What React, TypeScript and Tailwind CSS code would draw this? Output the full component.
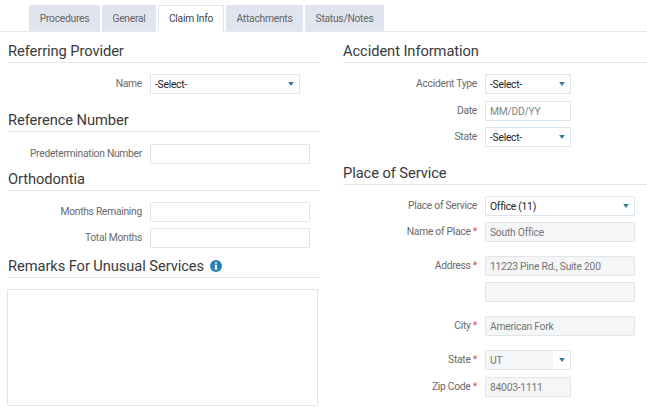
import type { ReactNode } from 'react'
import clsx from 'clsx'

const TABS = [
  { label: 'Procedures', width: 'w-[71px]' },
  { label: 'General', width: 'w-[54px]' },
  { label: 'Claim Info', width: 'w-[66px]' },
  { label: 'Attachments', width: 'w-[77px]' },
  { label: 'Status/Notes', width: 'w-[79px]' },
]

function Tabs({ active }: { active: string }) {
  return (
    <div className="flex h-8 items-end gap-[2px] border-b border-[#e6eaf1] pl-[29px]">
      {TABS.map((t) => (
        <button
          key={t.label}
          className={clsx(
            'flex-none rounded-t-[1px] border text-[10.3px] tracking-[-0.26px] whitespace-nowrap',
            t.width,
            t.label === active
              ? '-mb-px h-[27px] border-[#e0e6f0] border-b-white bg-white pt-px text-[#444]'
              : 'h-[26px] border-[#e0e4ee] bg-[#e0e4ee] pt-[2px] text-[#666]',
          )}
        >
          {t.label}
        </button>
      ))}
    </div>
  )
}

function Heading({ children, className }: { children: ReactNode; className?: string }) {
  return (
    <h2
      className={clsx(
        'flex h-[25px] items-start border-b border-[#e6e8ea] text-[14.7px] leading-[27px] tracking-[-0.08px] whitespace-nowrap text-[#3a3a3a]',
        className,
      )}
    >
      {children}
    </h2>
  )
}

function Field({
  label,
  required,
  className,
  children,
}: {
  label?: string
  required?: boolean
  className: string
  children: ReactNode
}) {
  return (
    <div className={clsx('flex h-5', className)}>
      <label className="mr-2 w-[134px] flex-none text-right text-[10.3px] leading-[19px] tracking-[-0.28px] whitespace-nowrap text-[#6a6a6a]">
        {label}
        {required && <span className="text-[#e0484f]"> *</span>}
      </label>
      {children}
    </div>
  )
}

function Caret() {
  return (
    <svg width="6" height="4" viewBox="0 0 6 4" className="flex-none">
      <path d="M0.2 0h5.6L3 4z" fill="#32799f" />
    </svg>
  )
}

function Select({ value, className }: { value: string; className: string }) {
  return (
    <div
      className={clsx(
        'flex h-5 items-center justify-between rounded-[1px] border border-[#d9e6ef] bg-white pr-[5px] pl-1 text-[10.3px] tracking-[-0.26px] text-[#222]',
        className,
      )}
    >
      <span className="pt-px">{value}</span>
      <Caret />
    </div>
  )
}

function Input({
  value,
  placeholder,
  disabled,
  className,
}: {
  value?: string
  placeholder?: string
  disabled?: boolean
  className: string
}) {
  return (
    <input
      defaultValue={value}
      placeholder={placeholder}
      disabled={disabled}
      className={clsx(
        'h-5 rounded-[1px] border px-1 pt-px text-[10.3px] tracking-[-0.24px] placeholder:text-[#858585]',
        disabled ? 'border-[#e2e5e8] bg-[#f5f6f8] text-[#757575]' : 'border-[#dae6ef] bg-white',
        className,
      )}
    />
  )
}

function InfoIcon() {
  return (
    <svg width="12" height="12" viewBox="0 0 12 12" className="mt-[7px] ml-[6px]">
      <circle cx="6" cy="6" r="6" fill="#2a80b4" />
      <path d="M5.1 2.2h1.8v1.5H5.1zM4.6 4.7h2.3v3.9h.6v1h-3v-1h.6V5.6h-.5z" fill="#fff" />
    </svg>
  )
}

export default function App() {
  return (
    <div className="h-[414px] w-[647px] overflow-hidden bg-white font-[Roboto,sans-serif]">
      <Tabs active="Claim Info" />

      <div className="flex gap-[23px] pt-[6px] pl-2">
        <div className="w-[312px] flex-none">
          <Heading>Referring Provider</Heading>
          <Field label="Name" className="mt-[11px]">
            <Select value="-Select-" className="w-[150px]" />
          </Field>

          <Heading className="mt-[13px]">Reference Number</Heading>
          <Field label="Predetermination Number" className="mt-3">
            <Input className="w-[160px]" />
          </Field>

          <Heading className="mt-[2px]">Orthodontia</Heading>
          <Field label="Months Remaining" className="mt-[11px]">
            <Input className="w-[160px]" />
          </Field>
          <Field label="Total Months" className="mt-[6px]">
            <Input className="w-[160px]" />
          </Field>

          <Heading className="mt-[5px]">
            Remarks For Unusual Services
            <InfoIcon />
          </Heading>
          <textarea className="mt-[11px] -ml-px block h-[117px] w-[311px] resize-none rounded-[1px] border border-[#dae5ee]" />
        </div>

        <div className="flex-1">
          <Heading>Accident Information</Heading>
          <Field label="Accident Type" className="mt-[11px]">
            <Select value="-Select-" className="w-[86px]" />
          </Field>
          <Field label="Date" className="mt-[7px]">
            <Input placeholder="MM/DD/YY" className="w-[86px]" />
          </Field>
          <Field label="State" className="mt-[6px]">
            <Select value="-Select-" className="w-[86px]" />
          </Field>

          <Heading className="mt-[13px]">Place of Service</Heading>
          <Field label="Place of Service" className="mt-[11px]">
            <Select value="Office (11)" className="w-[150px]" />
          </Field>
          <Field label="Name of Place" required className="mt-[6px]">
            <Input value="South Office" disabled className="w-[150px]" />
          </Field>
          <Field label="Address" required className="mt-[14px]">
            <Input value="11223 Pine Rd., Suite 200" disabled className="w-[150px]" />
          </Field>
          <Field className="mt-[6px]">
            <Input disabled className="w-[150px]" />
          </Field>
          <Field label="City" required className="mt-[14px]">
            <Input value="American Fork" disabled className="w-[150px]" />
          </Field>
          <Field label="State" required className="mt-[14px]">
            <div className="flex h-5 w-[86px] rounded-[1px] border border-[#e2e5e8] bg-white text-[10.3px] tracking-[-0.26px] text-[#757575]">
              <span className="w-[67px] bg-[#f5f6f8] pl-1 leading-[19px]">UT</span>
              <span className="flex flex-1 items-center justify-center">
                <Caret />
              </span>
            </div>
          </Field>
          <Field label="Zip Code" required className="mt-[7px]">
            <Input value="84003-1111" disabled className="w-[86px]" />
          </Field>
        </div>
      </div>
    </div>
  )
}
